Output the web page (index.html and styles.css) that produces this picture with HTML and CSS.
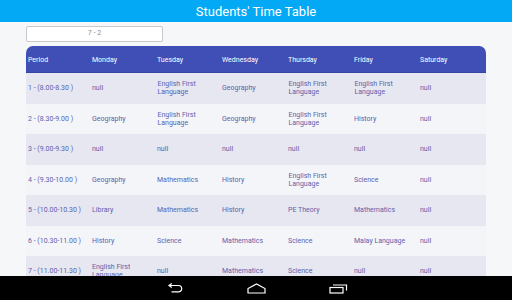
FILE: index.html
```html
<!DOCTYPE html>
<html>
<head>
<meta charset="utf-8">
<link rel="stylesheet" href="styles.css">
</head>
<body>
<div class="screen">
  <header class="appbar">Students' Time Table</header>
  <main class="content">
    <div class="select">7 - 2</div>
    <div class="table">
      <div class="row head">
        <div class="cell">Period</div><div class="cell">Monday</div><div class="cell">Tuesday</div><div class="cell">Wednesday</div><div class="cell">Thursday</div><div class="cell">Friday</div><div class="cell">Saturday</div>
      </div>
      <div class="row odd">
        <div class="cell">1 - (8.00-8.30 )</div><div class="cell">null</div><div class="cell ind">English First<br>Language</div><div class="cell">Geography</div><div class="cell ind">English First<br>Language</div><div class="cell ind">English First<br>Language</div><div class="cell">null</div>
      </div>
      <div class="row even">
        <div class="cell">2 - (8.30-9.00 )</div><div class="cell">Geography</div><div class="cell ind">English First<br>Language</div><div class="cell">Geography</div><div class="cell ind">English First<br>Language</div><div class="cell">History</div><div class="cell">null</div>
      </div>
      <div class="row odd">
        <div class="cell">3 - (9.00-9.30 )</div><div class="cell">null</div><div class="cell">null</div><div class="cell">null</div><div class="cell">null</div><div class="cell">null</div><div class="cell">null</div>
      </div>
      <div class="row even">
        <div class="cell">4 - (9.30-10.00 )</div><div class="cell">Geography</div><div class="cell">Mathematics</div><div class="cell">History</div><div class="cell ind">English First<br>Language</div><div class="cell">Science</div><div class="cell">null</div>
      </div>
      <div class="row odd">
        <div class="cell">5 - (10.00-10.30 )</div><div class="cell">Library</div><div class="cell">Mathematics</div><div class="cell">History</div><div class="cell">PE Theory</div><div class="cell">Mathematics</div><div class="cell">null</div>
      </div>
      <div class="row even">
        <div class="cell">6 - (10.30-11.00 )</div><div class="cell">History</div><div class="cell">Science</div><div class="cell">Mathematics</div><div class="cell">Science</div><div class="cell">Malay Language</div><div class="cell">null</div>
      </div>
      <div class="row odd">
        <div class="cell">7 - (11.00-11.30 )</div><div class="cell">English First<br>Language</div><div class="cell">null</div><div class="cell">Mathematics</div><div class="cell">Science</div><div class="cell">null</div><div class="cell">null</div>
      </div>
    </div>
  </main>
  <nav class="navbar">
    <svg class="nav-icon" width="18" height="11" viewBox="0 0 18 11"><path d="M3.5 2.5 H12.5 A3.2 3.2 0 0 1 12.5 8.9 H5.5" fill="none" stroke="#fff" stroke-width="1.2"/><path d="M5.8 0.6 L3 2.5 L5.8 4.4" fill="none" stroke="#fff" stroke-width="1.2"/></svg>
    <svg class="nav-icon" width="19" height="11" viewBox="0 0 19 11"><path d="M1 10 V5.5 L9.5 1 L18 5.5 V10 Z" fill="none" stroke="#fff" stroke-width="1.2"/></svg>
    <svg class="nav-icon" width="19" height="11" viewBox="0 0 19 11"><rect x="1" y="4.5" width="13" height="5.5" fill="none" stroke="#fff" stroke-width="1.2"/><path d="M4 2 H17.5 V7.5" fill="none" stroke="#fff" stroke-width="1.2"/></svg>
  </nav>
</div>
</body>
</html>
```
FILE: styles.css
```css
* { box-sizing: border-box; }
html, body { margin: 0; padding: 0; }
body {
  font-family: Roboto, "Liberation Sans", sans-serif;
  background: #f6f7f9;
}
.screen {
  width: 512px;
  height: 300px;
  display: flex;
  flex-direction: column;
  overflow: hidden;
}
.appbar {
  height: 22px;
  flex: none;
  background: #03a9f4;
  color: #fff;
  font-size: 13px;
  line-height: 23px;
  text-align: center;
}
.content {
  flex: 1;
  overflow: hidden;
  padding: 4px 26px 0 26px;
  background: #f6f7f9;
}
.select {
  width: 137px;
  height: 15.5px;
  background: #fff;
  border: 1px solid #c9c9cc;
  border-radius: 2px;
  color: #8a8a8a;
  font-size: 7px;
  line-height: 13.5px;
  text-align: center;
}
.table {
  margin-top: 4.5px;
  width: 460px;
}
.row {
  display: grid;
  grid-template-columns: 64px 65px 65px 66px 66px 66px 1fr;
  height: 30.5px;
  align-items: center;
  color: #5d62ae;
  font-size: 7px;
  line-height: 8px;
}
.row.head {
  height: 27px;
  background: #3f4fb5;
  color: #fff;
  border-radius: 7px 7px 0 0;
  border-bottom: 1px solid #3544a5;
}
.row.odd { background: #e6e7f0; }
.row.even { background: #f4f5f8; }
.cell { padding-left: 2px; }
.head .cell { padding-top: 1px; }
.ind { padding-left: 2.5px; }
.navbar {
  height: 24px;
  flex: none;
  background: #000;
  display: flex;
  align-items: center;
  justify-content: center;
  gap: 63px;
  padding-left: 2px;
}
.nav-icon { display: block; }
```
